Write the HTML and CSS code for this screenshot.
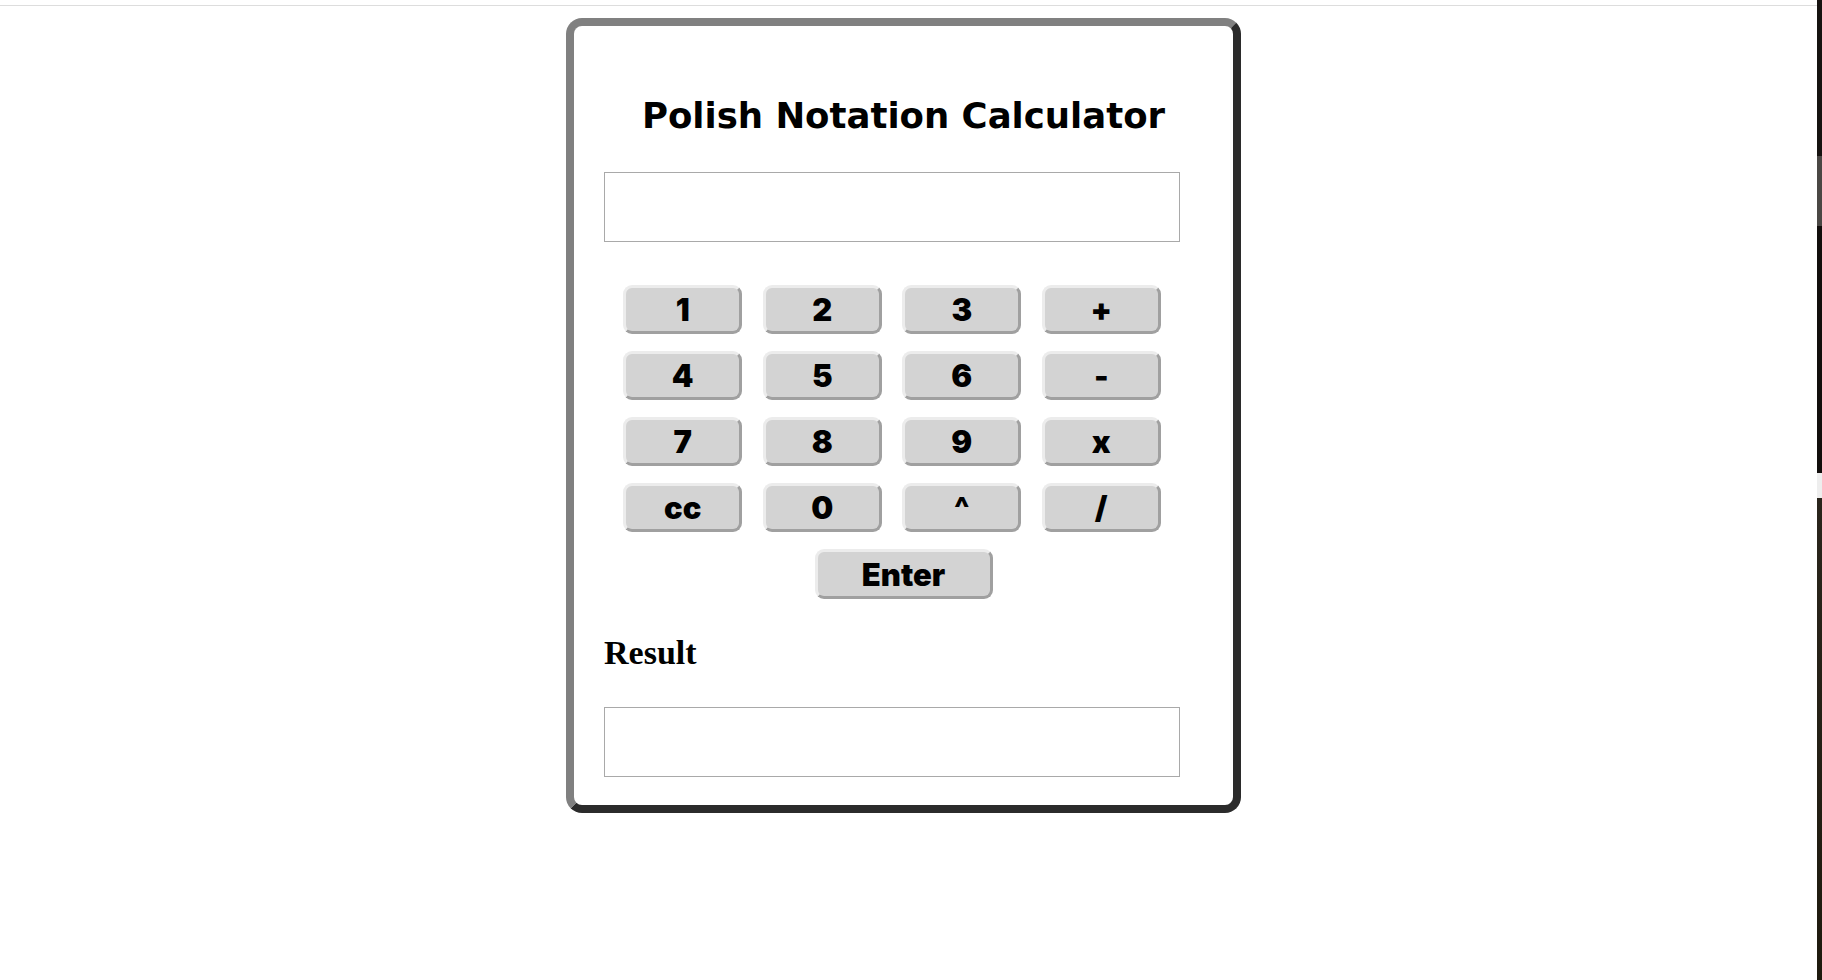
FILE: index.html
```
<!DOCTYPE html>
<html lang="en">
<head>
<meta charset="utf-8">
<title>Polish Notation Calculator</title>
<link rel="stylesheet" href="styles.css">
</head>
<body>
<div class="main">
  <div class="topline"></div>
  <div class="stage">
    <div class="card">
      <h1 class="title">Polish Notation Calculator</h1>
      <input class="field" type="text">
      <div class="pad">
        <button class="key">1</button>
        <button class="key">2</button>
        <button class="key">3</button>
        <button class="key">+</button>
        <button class="key">4</button>
        <button class="key">5</button>
        <button class="key">6</button>
        <button class="key">-</button>
        <button class="key">7</button>
        <button class="key">8</button>
        <button class="key">9</button>
        <button class="key">x</button>
        <button class="key">cc</button>
        <button class="key">0</button>
        <button class="key">^</button>
        <button class="key">/</button>
      </div>
      <div class="enter-row">
        <button class="key enter">Enter</button>
      </div>
      <h2 class="result-label">Result</h2>
      <input class="field" type="text">
    </div>
  </div>
</div>
<div class="edge"></div>
</body>
</html>
```

FILE: styles.css
```
html, body {
  margin: 0;
  padding: 0;
  background: #ffffff;
}

body {
  display: flex;
  min-height: 980px;
  font-family: "Liberation Serif", serif;
}

.main {
  flex: 1;
}

.topline {
  margin-top: 5px;
  height: 1px;
  background: #dddddd;
}

.stage {
  padding-right: 10px;
  padding-top: 12px;
  display: flex;
  justify-content: center;
}

.card {
  box-sizing: border-box;
  width: 675px;
  border: 8px solid;
  border-color: #808080 #2b2b2b #2b2b2b #808080;
  border-radius: 16px;
  padding: 69px 30px 28px 30px;
  background: #ffffff;
}

.title {
  margin: 0;
  font-family: "DejaVu Sans", sans-serif;
  font-weight: bold;
  font-size: 35.5px;
  line-height: 42px;
  text-align: center;
  color: #000;
}

.field {
  display: block;
  box-sizing: border-box;
  width: 576px;
  height: 70px;
  margin: 35px 0 0 0;
  padding: 0 8px;
  border: 1px solid #a9a9a9;
  background: #fff;
  font-size: 24px;
  outline: none;
}

.pad {
  width: 576px;
  margin-top: 43px;
  display: grid;
  grid-template-columns: repeat(4, 119px);
  grid-auto-rows: 49px;
  column-gap: 20.5px;
  row-gap: 17px;
  justify-content: center;
}

.key {
  box-sizing: border-box;
  display: flex;
  align-items: center;
  justify-content: center;
  margin: 0;
  padding: 0;
  background: #d3d3d3;
  border: 3px solid;
  border-color: #ececec #a0a0a0 #a0a0a0 #ececec;
  border-radius: 9px;
  font-family: "Inter", "Liberation Sans", sans-serif;
  font-weight: 900;
  font-size: 31px;
  color: #000;
}

.enter-row {
  margin-top: 17px;
  display: flex;
  justify-content: center;
}

.enter {
  width: 178px;
  height: 50px;
}

.result-label {
  margin: 35px 0 0 0;
  font-family: "Liberation Serif", serif;
  font-weight: bold;
  font-size: 34px;
  line-height: 38px;
  color: #000;
}

.result-label + .field {
  margin-top: 35px;
}

.edge {
  width: 5px;
  flex: none;
  background: linear-gradient(to bottom,
    #161310 0, #161310 156px,
    #4a4744 156px, #4a4744 226px,
    #120e0c 226px, #120e0c 473px,
    #eeeeee 473px, #eeeeee 498px,
    #2a251c 498px, #1e1a0e 980px);
}
```
